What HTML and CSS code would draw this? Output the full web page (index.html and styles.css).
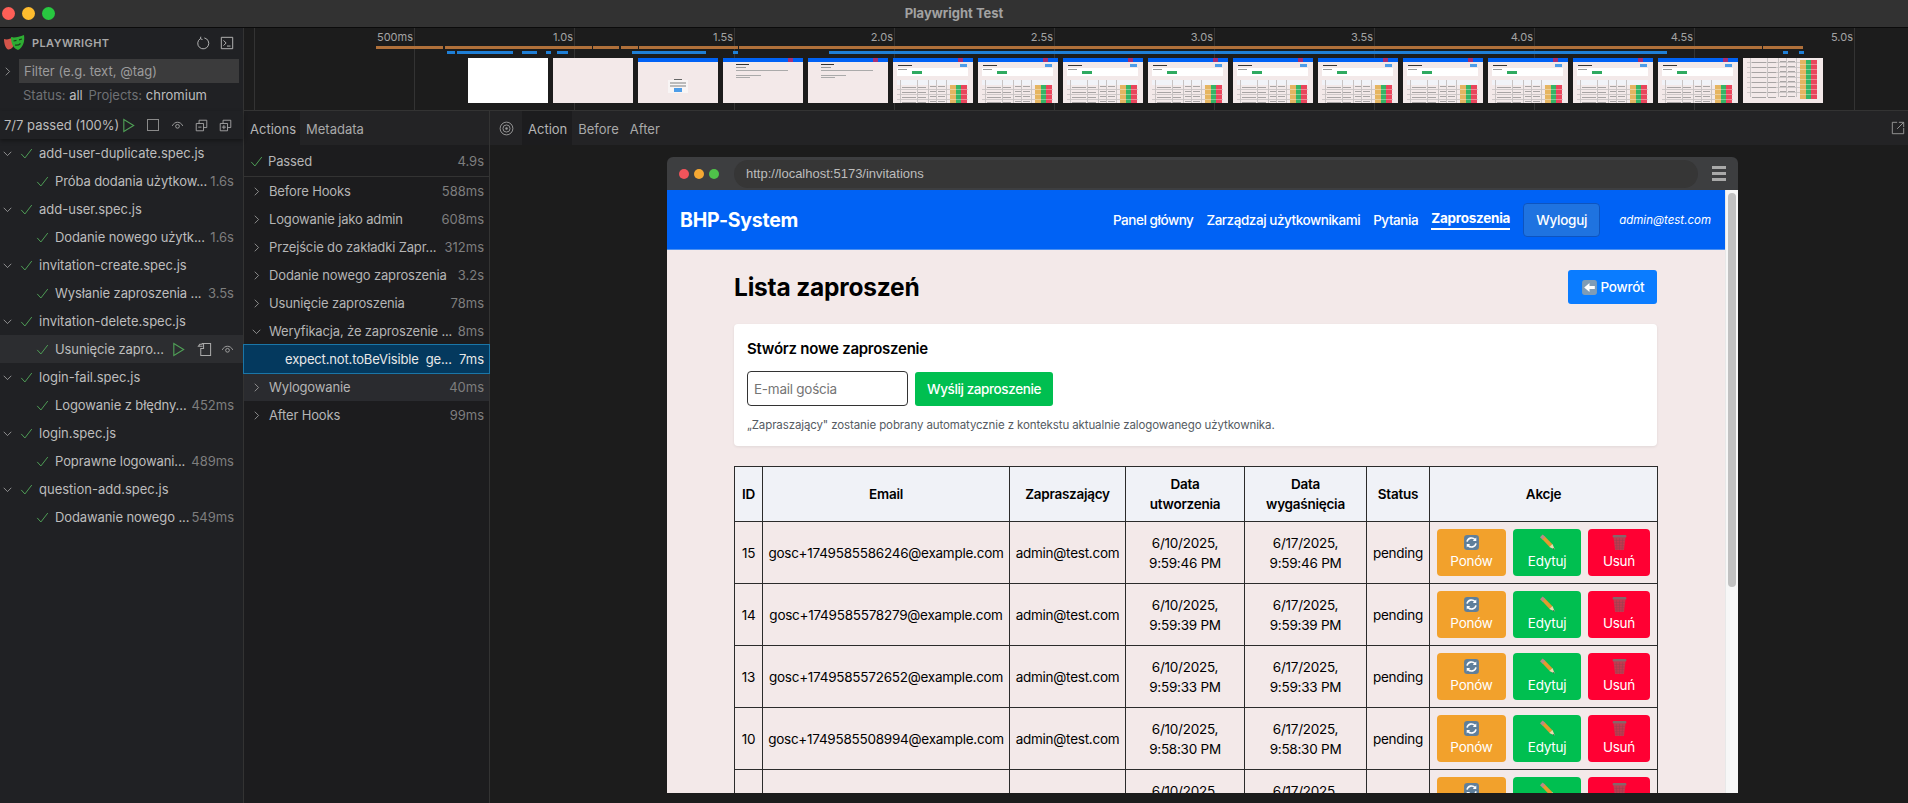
FILE: index.html
```html
<!DOCTYPE html>
<html lang="pl">
<head>
    <title>Playwright Test</title>
    <meta charset="UTF-8">
    <meta name="viewport" content="width=device-width, initial-scale=1.0">
    <link rel="stylesheet" href="styles.css">
</head>
<body>
    <svg class="defs" xmlns="http://www.w3.org/2000/svg">
        <symbol id="i-right" viewBox="0 0 16 16"><path d="M5.5 2.5 11 8l-5.5 5.5" fill="none" stroke="currentColor" stroke-width="1.1"/></symbol>
        <symbol id="i-down" viewBox="0 0 16 16"><path d="M2.5 5.5 8 11l5.5-5.5" fill="none" stroke="currentColor" stroke-width="1.1"/></symbol>
        <symbol id="i-check" viewBox="0 0 16 16"><path d="M1.5 8.5 6 13.5 14.5 2.5" fill="none" stroke="currentColor" stroke-width="1.2"/></symbol>
        <symbol id="i-play" viewBox="0 0 16 16"><path d="M3 1.5v13L13.5 8z" fill="none" stroke="currentColor" stroke-width="1.2"/></symbol>
        <symbol id="i-eye" viewBox="0 0 16 16"><path d="M1.5 8.5C3 5.5 5.5 4 8 4s5 1.500 6.5 4.500" fill="none" stroke="currentColor" stroke-width="1.1"/><circle cx="8" cy="9" r="2.3" fill="none" stroke="currentColor" stroke-width="1.1"/></symbol>
        <symbol id="i-collapse" viewBox="0 0 16 16"><path d="M1.5 5.5h9v9h-9zM5 5.5V1.5h9.5v9h-4M4 10h4" fill="none" stroke="currentColor" stroke-width="1.1"/></symbol>
        <symbol id="i-expand" viewBox="0 0 16 16"><path d="M1.5 5.5h9v9h-9zM5 5.5V1.5h9.5v9h-4M3.500 10h5M6 7.500v5" fill="none" stroke="currentColor" stroke-width="1.1"/></symbol>
        <symbol id="i-watch" viewBox="0 0 16 16"><path d="M6 4.5H1.500L3 2.500h3M5 1.500h9.500v13H4V7h3V1.500" fill="none" stroke="currentColor" stroke-width="1.1"/></symbol>
        <symbol id="i-refresh" viewBox="0 0 16 16"><rect x="1" y="1" width="14" height="14" rx="3" fill="#5f7f9b"/><path d="M3.800 7.200A4.300 4.300 0 0 1 11.300 5.300M12.200 8.800A4.300 4.300 0 0 1 4.700 10.700" fill="none" stroke="#fff" stroke-width="1.5"/><path d="M12.500 3.300v3.400H9.200zM3.500 12.700V9.300h3.300z" fill="#fff"/></symbol>
        <symbol id="i-pencil" viewBox="0 0 16 16"><path d="M4 3.300 11.300 11" stroke="#e49a2f" stroke-width="3.6"/><path d="M2.200 1.700 4.600 4" stroke="#b98a86" stroke-width="3.6"/><path d="M9.700 12.300 12.700 9.500 14.800 14.700z" fill="#ecd7ae"/><path d="M13.500 13.200 14.800 14.700 12.900 14z" fill="#444"/></symbol>
        <symbol id="i-trash" viewBox="0 0 16 16"><path d="M2.300 3 3.800 15h8.400l1.500-12z" fill="#c43a50"/><path d="M3 6h10M3.300 8.500h9.400M3.600 11h8.800M3.800 13.300h8.400M5 4l.6 11M8 4v11M11 4l-.6 11" stroke="#98404f" stroke-width=".5"/><rect x="1.500" y="1" width="13" height="2.4" rx="1" fill="#86666a"/></symbol>
        <symbol id="i-back" viewBox="0 0 16 16"><rect x="1" y="1" width="14" height="14" rx="2.5" fill="#7f9cb6"/><path d="M3 8 8 3.800v2.700h5v3H8v2.700z" fill="#fff"/></symbol>
    </svg>

    <header class="titlebar">
        <span class="light light-red"></span>
        <span class="light light-yellow"></span>
        <span class="light light-green"></span>
        <div class="titlebar-text">Playwright Test</div>
    </header>

    <div class="main">
        <aside class="sidebar">
            <div class="brand">
                <svg class="brand-logo" viewBox="0 0 22 16">
                    <path d="M1 4.500C4 5.500 7 4.500 10 3l1 7c-1 4-4 5-6 5-2-1-4-5-4-10.500z" fill="#d4544a"/>
                    <path d="M8 2.500C11 3.500 16 2.500 21 .5c1 6.500-1 12.500-6 15-4-1.500-7-5.500-7-13z" fill="#2ead33"/>
                    <path d="M10.500 6.500l3-.7M16 5.300l3-.8M12 10.500c2 .5 4 0 5.500-1.500" stroke="#1b3f1d" stroke-width="1.2" fill="none"/>
                </svg>
                <span class="brand-name">PLAYWRIGHT</span>
                <svg class="brand-btn" viewBox="0 0 16 16"><path d="M5 3A6.300 6.300 0 1 0 9.500 2.200M5.500 .8 5 3.200l2.400.8" fill="none" stroke="currentColor" stroke-width="1.1"/></svg>
                <svg class="brand-btn" viewBox="0 0 16 16"><path d="M1.500 1.500h13v13h-13zM4 5l3 3-3 3M8 11.500h4" fill="none" stroke="currentColor" stroke-width="1.1"/></svg>
            </div>
            <div class="filter-row">
                <svg class="chev"><use href="#i-right"/></svg>
                <input class="filter-input" type="text" placeholder="Filter (e.g. text, @tag)">
            </div>
            <div class="status-row">
                <span class="dim">Status:</span> <span class="lit">all</span>
                <span class="dim status-gap">Projects:</span> <span class="lit">chromium</span>
            </div>
            <div class="toolbar">
                <span class="toolbar-count">7/7 passed (100%)</span>
                <svg class="tool tool-play"><use href="#i-play"/></svg>
                <span class="tool-stop"></span>
                <svg class="tool"><use href="#i-eye"/></svg>
                <svg class="tool"><use href="#i-collapse"/></svg>
                <svg class="tool"><use href="#i-expand"/></svg>
            </div>
            <div class="tree">
                <div class="tree-row"><svg class="chev"><use href="#i-down"/></svg><svg class="check"><use href="#i-check"/></svg><span class="tree-name">add-user-duplicate.spec.js</span></div>
                <div class="tree-row tree-child"><svg class="check"><use href="#i-check"/></svg><span class="tree-name">Próba dodania użytkow...</span><span class="time">1.6s</span></div>
                <div class="tree-row"><svg class="chev"><use href="#i-down"/></svg><svg class="check"><use href="#i-check"/></svg><span class="tree-name">add-user.spec.js</span></div>
                <div class="tree-row tree-child"><svg class="check"><use href="#i-check"/></svg><span class="tree-name">Dodanie nowego użytk...</span><span class="time">1.6s</span></div>
                <div class="tree-row"><svg class="chev"><use href="#i-down"/></svg><svg class="check"><use href="#i-check"/></svg><span class="tree-name">invitation-create.spec.js</span></div>
                <div class="tree-row tree-child"><svg class="check"><use href="#i-check"/></svg><span class="tree-name">Wysłanie zaproszenia ...</span><span class="time">3.5s</span></div>
                <div class="tree-row"><svg class="chev"><use href="#i-down"/></svg><svg class="check"><use href="#i-check"/></svg><span class="tree-name">invitation-delete.spec.js</span></div>
                <div class="tree-row tree-child tree-active">
                    <svg class="check"><use href="#i-check"/></svg><span class="tree-name">Usunięcie zapro...</span>
                    <span class="tree-tools">
                        <svg class="tool tool-play"><use href="#i-play"/></svg>
                        <svg class="tool tool-watch"><use href="#i-watch"/></svg>
                        <svg class="tool tool-eye"><use href="#i-eye"/></svg>
                    </span>
                </div>
                <div class="tree-row"><svg class="chev"><use href="#i-down"/></svg><svg class="check"><use href="#i-check"/></svg><span class="tree-name">login-fail.spec.js</span></div>
                <div class="tree-row tree-child"><svg class="check"><use href="#i-check"/></svg><span class="tree-name">Logowanie z błędny...</span><span class="time">452ms</span></div>
                <div class="tree-row"><svg class="chev"><use href="#i-down"/></svg><svg class="check"><use href="#i-check"/></svg><span class="tree-name">login.spec.js</span></div>
                <div class="tree-row tree-child"><svg class="check"><use href="#i-check"/></svg><span class="tree-name">Poprawne logowani...</span><span class="time">489ms</span></div>
                <div class="tree-row"><svg class="chev"><use href="#i-down"/></svg><svg class="check"><use href="#i-check"/></svg><span class="tree-name">question-add.spec.js</span></div>
                <div class="tree-row tree-child"><svg class="check"><use href="#i-check"/></svg><span class="tree-name">Dodawanie nowego ...</span><span class="time">549ms</span></div>
            </div>
        </aside>

        <div class="workspace">
            <section class="timeline">
                <div class="tick" style="left: 10px"></div>
                <div class="tick" style="left: 170px"><span>500ms</span></div>
                <div class="tick" style="left: 330px"><span>1.0s</span></div>
                <div class="tick" style="left: 490px"><span>1.5s</span></div>
                <div class="tick" style="left: 650px"><span>2.0s</span></div>
                <div class="tick" style="left: 810px"><span>2.5s</span></div>
                <div class="tick" style="left: 970px"><span>3.0s</span></div>
                <div class="tick" style="left: 1130px"><span>3.5s</span></div>
                <div class="tick" style="left: 1290px"><span>4.0s</span></div>
                <div class="tick" style="left: 1450px"><span>4.5s</span></div>
                <div class="tick" style="left: 1610px"><span>5.0s</span></div>

                <div class="bar bar-orange" style="left: 132px; width: 67px"></div>
                <div class="bar bar-orange" style="left: 201px; width: 147px"></div>
                <div class="bar bar-orange" style="left: 349px; width: 26px"></div>
                <div class="bar bar-orange" style="left: 377px; width: 17px"></div>
                <div class="bar bar-orange" style="left: 395px; width: 99px"></div>
                <div class="bar bar-orange" style="left: 495px; width: 1023px"></div>
                <div class="bar bar-orange" style="left: 1519px; width: 40px"></div>

                <div class="bar bar-blue" style="left: 203px; width: 8px"></div>
                <div class="bar bar-blue" style="left: 213px; width: 56px"></div>
                <div class="bar bar-blue" style="left: 278px; width: 15px"></div>
                <div class="bar bar-blue" style="left: 302px; width: 5px"></div>
                <div class="bar bar-blue" style="left: 313px; width: 11px"></div>
                <div class="bar bar-blue" style="left: 388px; width: 74px"></div>
                <div class="bar bar-blue" style="left: 489px; width: 5px"></div>
                <div class="bar bar-blue" style="left: 585px; width: 838px"></div>
                <div class="bar bar-blue" style="left: 1539px; width: 5px"></div>
                <div class="bar bar-blue" style="left: 1555px; width: 5px"></div>

                <div class="filmstrip">
                    <div class="thumb thumb-blank"></div>
                    <div class="thumb thumb-pink"></div>
                    <div class="thumb thumb-login"></div>
                    <div class="thumb thumb-panel"></div>
                    <div class="thumb thumb-panel"></div>
                    <div class="thumb thumb-list"></div>
                    <div class="thumb thumb-list"></div>
                    <div class="thumb thumb-list"></div>
                    <div class="thumb thumb-list"></div>
                    <div class="thumb thumb-list"></div>
                    <div class="thumb thumb-list"></div>
                    <div class="thumb thumb-list"></div>
                    <div class="thumb thumb-list"></div>
                    <div class="thumb thumb-list"></div>
                    <div class="thumb thumb-list"></div>
                    <div class="thumb thumb-scrolled"></div>
                </div>
            </section>

            <div class="details">
                <section class="actions">
                    <div class="tabs">
                        <span class="tab tab-active">Actions</span>
                        <span class="tab">Metadata</span>
                    </div>
                    <div class="passed-row">
                        <svg class="check"><use href="#i-check"/></svg>
                        <span class="action-name">Passed</span>
                        <span class="time">4.9s</span>
                    </div>
                    <div class="action-row"><svg class="chev"><use href="#i-right"/></svg><span class="action-name">Before Hooks</span><span class="time">588ms</span></div>
                    <div class="action-row"><svg class="chev"><use href="#i-right"/></svg><span class="action-name">Logowanie jako admin</span><span class="time">608ms</span></div>
                    <div class="action-row"><svg class="chev"><use href="#i-right"/></svg><span class="action-name">Przejście do zakładki Zapr...</span><span class="time">312ms</span></div>
                    <div class="action-row"><svg class="chev"><use href="#i-right"/></svg><span class="action-name">Dodanie nowego zaproszenia</span><span class="time">3.2s</span></div>
                    <div class="action-row"><svg class="chev"><use href="#i-right"/></svg><span class="action-name">Usunięcie zaproszenia</span><span class="time">78ms</span></div>
                    <div class="action-row"><svg class="chev"><use href="#i-down"/></svg><span class="action-name">Weryfikacja, że zaproszenie ...</span><span class="time">8ms</span></div>
                    <div class="action-row action-selected"><span class="action-name">expect.not.toBeVisible&nbsp; ge...</span><span class="time">7ms</span></div>
                    <div class="action-row action-hover"><svg class="chev"><use href="#i-right"/></svg><span class="action-name">Wylogowanie</span><span class="time">40ms</span></div>
                    <div class="action-row"><svg class="chev"><use href="#i-right"/></svg><span class="action-name">After Hooks</span><span class="time">99ms</span></div>
                </section>

                <section class="snapshot">
                    <div class="tabs snapshot-tabs">
                        <svg class="target" viewBox="0 0 16 16"><circle cx="8" cy="8" r="6.8" fill="none" stroke="currentColor"/><circle cx="8" cy="8" r="3.8" fill="none" stroke="currentColor"/><circle cx="8" cy="8" r="1.3" fill="currentColor"/></svg>
                        <span class="tab tab-active">Action</span>
                        <span class="tab">Before</span>
                        <span class="tab">After</span>
                        <svg class="popout" viewBox="0 0 16 16"><path d="M7 1.500H1.500v13h13V8M9 1.500h5.500V7M14.500 1.500 7 9" fill="none" stroke="currentColor"/></svg>
                    </div>

                    <div class="browser">
                        <div class="browser-bar">
                            <span class="dot dot-red"></span>
                            <span class="dot dot-yellow"></span>
                            <span class="dot dot-green"></span>
                            <div class="url">http://localhost:5173/invitations</div>
                            <div class="burger"><span></span><span></span><span></span></div>
                        </div>
                        <div class="viewport">
                            <div class="app">
                                <nav class="navbar">
                                    <div class="nav-logo">BHP-System</div>
                                    <div class="nav-links">
                                        <a href="#" class="nav-link">Panel główny</a>
                                        <a href="#" class="nav-link">Zarządzaj użytkownikami</a>
                                        <a href="#" class="nav-link">Pytania</a>
                                        <a href="#" class="nav-link nav-current">Zaproszenia</a>
                                        <button type="button" class="logout">Wyloguj</button>
                                        <span class="nav-user">admin@test.com</span>
                                    </div>
                                </nav>
                                <div class="content">
                                    <div class="page-head">
                                        <h1>Lista zaproszeń</h1>
                                        <button type="button" class="back"><svg class="emoji"><use href="#i-back"/></svg>Powrót</button>
                                    </div>
                                    <div class="card">
                                        <h2>Stwórz nowe zaproszenie</h2>
                                        <div class="invite-form">
                                            <input class="invite-input" type="text" placeholder="E-mail gościa">
                                            <button type="button" class="invite-send">Wyślij zaproszenie</button>
                                        </div>
                                        <p class="invite-note">„Zapraszający" zostanie pobrany automatycznie z kontekstu aktualnie zalogowanego użytkownika.</p>
                                    </div>
                                    <table class="invites">
                                        <thead>
                                            <tr>
                                                <th class="col-id">ID</th>
                                                <th class="col-email">Email</th>
                                                <th class="col-by">Zapraszający</th>
                                                <th class="col-created">Data utworzenia</th>
                                                <th class="col-expires">Data wygaśnięcia</th>
                                                <th class="col-status">Status</th>
                                                <th class="col-actions">Akcje</th>
                                            </tr>
                                        </thead>
                                        <tbody>
                                            <tr>
                                                <td>15</td>
                                                <td>gosc+1749585586246@example.com</td>
                                                <td>admin@test.com</td>
                                                <td>6/10/2025,<br>9:59:46 PM</td>
                                                <td>6/17/2025,<br>9:59:46 PM</td>
                                                <td>pending</td>
                                                <td class="cell-actions"><div class="row-actions">
                                                    <button type="button" class="act act-resend"><svg class="emoji"><use href="#i-refresh"/></svg>Ponów</button>
                                                    <button type="button" class="act act-edit"><svg class="emoji"><use href="#i-pencil"/></svg>Edytuj</button>
                                                    <button type="button" class="act act-delete"><svg class="emoji"><use href="#i-trash"/></svg>Usuń</button>
                                                </div></td>
                                            </tr>
                                            <tr>
                                                <td>14</td>
                                                <td>gosc+1749585578279@example.com</td>
                                                <td>admin@test.com</td>
                                                <td>6/10/2025,<br>9:59:39 PM</td>
                                                <td>6/17/2025,<br>9:59:39 PM</td>
                                                <td>pending</td>
                                                <td class="cell-actions"><div class="row-actions">
                                                    <button type="button" class="act act-resend"><svg class="emoji"><use href="#i-refresh"/></svg>Ponów</button>
                                                    <button type="button" class="act act-edit"><svg class="emoji"><use href="#i-pencil"/></svg>Edytuj</button>
                                                    <button type="button" class="act act-delete"><svg class="emoji"><use href="#i-trash"/></svg>Usuń</button>
                                                </div></td>
                                            </tr>
                                            <tr>
                                                <td>13</td>
                                                <td>gosc+1749585572652@example.com</td>
                                                <td>admin@test.com</td>
                                                <td>6/10/2025,<br>9:59:33 PM</td>
                                                <td>6/17/2025,<br>9:59:33 PM</td>
                                                <td>pending</td>
                                                <td class="cell-actions"><div class="row-actions">
                                                    <button type="button" class="act act-resend"><svg class="emoji"><use href="#i-refresh"/></svg>Ponów</button>
                                                    <button type="button" class="act act-edit"><svg class="emoji"><use href="#i-pencil"/></svg>Edytuj</button>
                                                    <button type="button" class="act act-delete"><svg class="emoji"><use href="#i-trash"/></svg>Usuń</button>
                                                </div></td>
                                            </tr>
                                            <tr>
                                                <td>10</td>
                                                <td>gosc+1749585508994@example.com</td>
                                                <td>admin@test.com</td>
                                                <td>6/10/2025,<br>9:58:30 PM</td>
                                                <td>6/17/2025,<br>9:58:30 PM</td>
                                                <td>pending</td>
                                                <td class="cell-actions"><div class="row-actions">
                                                    <button type="button" class="act act-resend"><svg class="emoji"><use href="#i-refresh"/></svg>Ponów</button>
                                                    <button type="button" class="act act-edit"><svg class="emoji"><use href="#i-pencil"/></svg>Edytuj</button>
                                                    <button type="button" class="act act-delete"><svg class="emoji"><use href="#i-trash"/></svg>Usuń</button>
                                                </div></td>
                                            </tr>
                                            <tr>
                                                <td></td>
                                                <td></td>
                                                <td></td>
                                                <td>6/10/2025,<br>&nbsp;</td>
                                                <td>6/17/2025,<br>&nbsp;</td>
                                                <td></td>
                                                <td class="cell-actions"><div class="row-actions">
                                                    <button type="button" class="act act-resend"><svg class="emoji"><use href="#i-refresh"/></svg>Ponów</button>
                                                    <button type="button" class="act act-edit"><svg class="emoji"><use href="#i-pencil"/></svg>Edytuj</button>
                                                    <button type="button" class="act act-delete"><svg class="emoji"><use href="#i-trash"/></svg>Usuń</button>
                                                </div></td>
                                            </tr>
                                        </tbody>
                                    </table>
                                </div>
                            </div>
                            <div class="scrollbar"><div class="scrollbar-thumb"></div></div>
                        </div>
                    </div>
                </section>
            </div>
        </div>
    </div>
</body>
</html>
```

FILE: styles.css
```css
* {
    box-sizing: border-box;
}
html, body {
    height: 100%;
}
body {
    margin: 0;
    display: flex;
    flex-direction: column;
    overflow: hidden;
    background-color: #1c1c1c;
    color: #cccccc;
    font-family: Inter, "Noto Sans", sans-serif;
    font-size: 13px;
}
.defs {
    display: none;
}

/* window title */
.titlebar {
    position: relative;
    flex: none;
    height: 28px;
    display: flex;
    align-items: center;
    gap: 7px;
    padding-left: 2px;
    background-color: #323232;
    border-bottom: 1px solid #0b0b0b;
}
.light {
    width: 13px;
    height: 13px;
    border-radius: 50%;
}
.light-red { background-color: #ff5f57; }
.light-yellow { background-color: #febc2e; }
.light-green { background-color: #28c840; }
.titlebar-text {
    position: absolute;
    left: 0;
    right: 0;
    top: 5px;
    text-align: center;
    font-size: 13px;
    font-weight: 700;
    color: #a2a2a2;
}

.main {
    flex: 1;
    display: flex;
    min-height: 0;
}

/* left sidebar */
.sidebar {
    flex: none;
    width: 244px;
    background-color: #202124;
    border-right: 1px solid #333333;
}
.brand {
    height: 31px;
    display: flex;
    align-items: center;
    padding: 0 9px 2px 3px;
}
.brand-logo {
    width: 22px;
    height: 17px;
}
.brand-name {
    flex: 1;
    margin-left: 7px;
    font-size: 11px;
    font-weight: 600;
    letter-spacing: 0.4px;
    color: #a8a8a8;
}
.brand-btn {
    width: 14px;
    height: 14px;
    margin-left: 10px;
    color: #b5b5b5;
}
.filter-row {
    height: 24px;
    display: flex;
    align-items: center;
    padding-left: 2px;
}
.chev {
    flex: none;
    width: 11px;
    height: 11px;
    color: #b0b0b0;
}
.filter-input {
    width: 220px;
    height: 24px;
    margin-left: 6px;
    padding: 0 5px;
    border: none;
    outline: none;
    background-color: #3b3b3c;
    color: #ccc;
    font: inherit;
}
.filter-input::placeholder {
    color: #9c9c9c;
}
.status-row {
    height: 24px;
    margin-bottom: 4px;
    padding-left: 23px;
    line-height: 24px;
}
.dim { color: #6f7175; }
.lit { color: #bdbdbd; }
.status-gap { margin-left: 2px; }
.toolbar {
    position: relative;
    height: 28px;
    display: flex;
    align-items: center;
    padding-left: 4px;
    box-shadow: 0 2px 4px rgba(0, 0, 0, 0.35);
}
.toolbar-count {
    width: 126px;
    color: #bcbcbc;
}
.tool {
    flex: none;
    width: 13px;
    height: 13px;
    margin-right: 11px;
    color: #a9a9a9;
}
.tool-play {
    color: #4f9f56;
}
.toolbar .tool-play {
    width: 15px;
    height: 15px;
    margin-right: 11px;
}
.tool-stop {
    flex: none;
    width: 12px;
    height: 12px;
    margin-right: 12px;
    border: 1px solid #8a8a8a;
}
.tree-row {
    height: 28px;
    display: flex;
    align-items: center;
    padding-left: 2px;
    padding-right: 9px;
}
.check {
    flex: none;
    width: 13px;
    height: 13px;
    margin-left: 7px;
    color: #4f9f56;
}
.tree-name {
    margin-left: 6px;
    color: #bdbdbd;
    white-space: nowrap;
}
.tree-child {
    padding-left: 29px;
}
.tree-child .tree-name {
    letter-spacing: -0.1px;
}
.tree-active {
    background-color: #2c2d30;
    padding-right: 0;
}
.tree-tools {
    margin-left: auto;
    display: flex;
    align-items: center;
}
.tree-tools .tool-play {
    width: 15px;
    height: 15px;
    margin-right: 11px;
}
.tree-tools .tool-watch {
    width: 15px;
    height: 15px;
    margin-right: 9px;
}
.tree-tools .tool-eye {
    margin-right: 9px;
}
.time {
    flex: none;
    margin-left: auto;
    color: #7e7e7e;
    white-space: nowrap;
}

/* timeline strip */
.workspace {
    flex: 1;
    display: flex;
    flex-direction: column;
    min-width: 0;
}
.timeline {
    position: relative;
    flex: none;
    height: 83px;
    background-color: #1c1c1c;
    border-bottom: 1px solid #333333;
    overflow: hidden;
}
.tick {
    position: absolute;
    top: 0;
    bottom: 0;
    border-left: 1px solid #333333;
}
.tick span {
    position: absolute;
    top: 2px;
    right: 100%;
    padding-right: 2px;
    font-size: 11px;
    line-height: 14px;
    color: #a4a4a4;
}
.bar {
    position: absolute;
}
.bar-orange {
    top: 18px;
    height: 3px;
    background-color: #b0703a;
}
.bar-blue {
    top: 23px;
    height: 3px;
    background-color: #1f7fd6;
}
.filmstrip {
    position: absolute;
    left: 224px;
    top: 30px;
    display: flex;
    gap: 5px;
}
.thumb {
    width: 80px;
    height: 45px;
    background-repeat: no-repeat;
}
.thumb-blank {
    background-color: #fff;
}
.thumb-pink {
    background-color: #f3e9e9;
}
.thumb-login {
    background-color: #f3e9e9;
    background-image:
        linear-gradient(#0062f5, #0062f5),
        linear-gradient(#4d9de8, #4d9de8),
        linear-gradient(#bbb, #bbb),
        linear-gradient(#bbb, #bbb),
        linear-gradient(#666, #666),
        linear-gradient(#f8f5f5, #f8f5f5);
    background-size: 100% 4px, 8px 4px, 16px 2px, 16px 2px, 8px 1px, 20px 13px;
    background-position: 0 0, 36px 30px, 32px 24px, 32px 27px, 36px 21px, 30px 22px;
}
.thumb-panel {
    background-color: #f3e9e9;
    background-image:
        linear-gradient(#a52f7a, #a52f7a),
        linear-gradient(#0062f5, #0062f5),
        linear-gradient(#333, #333),
        linear-gradient(#999, #999),
        linear-gradient(#aaa, #aaa),
        linear-gradient(#aaa, #aaa),
        linear-gradient(#aaa, #aaa);
    background-size: 5px 4px, 100% 4px, 13px 1px, 10px 1px, 52px 1px, 25px 1px, 14px 1px;
    background-position: 65px 0, 0 0, 13px 6px, 13px 9px, 13px 12px, 13px 17px, 13px 19px;
}
.thumb-list {
    background-color: #f3e9e9;
    background-image:
        linear-gradient(#a52f7a, #a52f7a),
        linear-gradient(#0062f5, #0062f5),
        linear-gradient(#4d9de8, #4d9de8),
        linear-gradient(#333, #333),
        linear-gradient(#999, #999),
        linear-gradient(#2faa60, #2faa60),
        linear-gradient(#fff, #fff),
        repeating-linear-gradient(transparent 0 4px, rgba(255, 255, 255, 0.35) 4px 5px),
        linear-gradient(#e5b562, #e5b562),
        linear-gradient(#35b566, #35b566),
        linear-gradient(#e9455c, #e9455c),
        repeating-linear-gradient(transparent 0 2px, #a8a4a4 2px 3px, transparent 3px 5px),
        repeating-linear-gradient(transparent 0 2px, #a8a4a4 2px 3px, transparent 3px 5px),
        repeating-linear-gradient(transparent 0 1px, #a8a4a4 1px 2px, transparent 2px 5px),
        repeating-linear-gradient(transparent 0 1px, #a8a4a4 1px 2px, transparent 2px 5px),
        linear-gradient(90deg, transparent 0 3px, #c9c4c4 3px 4px, transparent 4px 20px, #c9c4c4 20px 21px, transparent 21px 31px, #c9c4c4 31px 32px, transparent 32px 39px, #c9c4c4 39px 40px, transparent 40px 49px, #c9c4c4 49px 50px, transparent 50px),
        linear-gradient(#f1f3f8, #f1f3f8),
        repeating-linear-gradient(#f3e9e9 0 4px, #cfc9c9 4px 5px);
    background-size: 5px 4px, 100% 4px, 7px 3px, 14px 1px, 9px 1px, 10px 3px, 71px 8px, 17px 18px, 6px 18px, 5px 18px, 6px 18px, 14px 18px, 8px 18px, 6px 18px, 7px 18px, 71px 23px, 71px 5px, 71px 23px;
    background-position: 65px 0, 0 0, 67px 6px, 5px 7px, 5px 11px, 19px 13px, 4px 10px, 57px 27px, 57px 27px, 63px 27px, 68px 27px, 9px 27px, 25px 27px, 37px 27px, 45px 27px, 4px 22px, 4px 22px, 4px 22px;
}
.thumb-scrolled {
    background-color: #f3e9e9;
    background-image:
        repeating-linear-gradient(transparent 0 4px, rgba(255, 255, 255, 0.35) 4px 5px),
        linear-gradient(#e5b562, #e5b562),
        linear-gradient(#35b566, #35b566),
        linear-gradient(#e9455c, #e9455c),
        repeating-linear-gradient(transparent 0 2px, #a8a4a4 2px 3px, transparent 3px 5px),
        repeating-linear-gradient(transparent 0 2px, #a8a4a4 2px 3px, transparent 3px 5px),
        repeating-linear-gradient(transparent 0 1px, #a8a4a4 1px 2px, transparent 2px 5px),
        repeating-linear-gradient(transparent 0 1px, #a8a4a4 1px 2px, transparent 2px 5px),
        linear-gradient(90deg, transparent 0 3px, #c9c4c4 3px 4px, transparent 4px 20px, #c9c4c4 20px 21px, transparent 21px 31px, #c9c4c4 31px 32px, transparent 32px 39px, #c9c4c4 39px 40px, transparent 40px 49px, #c9c4c4 49px 50px, transparent 50px),
        repeating-linear-gradient(#f3e9e9 0 4px, #cfc9c9 4px 5px);
    background-size: 17px 39px, 6px 39px, 5px 39px, 6px 39px, 14px 39px, 8px 39px, 6px 39px, 7px 39px, 71px 39px, 70px 39px;
    background-position: 57px 2px, 57px 2px, 63px 2px, 68px 2px, 9px 2px, 25px 2px, 37px 2px, 45px 2px, 4px 0, 4px 0;
}

/* actions list */
.details {
    flex: 1;
    display: flex;
    min-height: 0;
}
.actions {
    flex: none;
    width: 246px;
    background-color: #1c1c1e;
    border-right: 1px solid #333333;
}
.tabs {
    height: 34px;
    display: flex;
    background-color: #232325;
}
.tab {
    padding: 0 6px;
    line-height: 36px;
    color: #a9a9a9;
}
.tab-active {
    background-color: #1c1c1e;
    color: #b5b5b5;
}
.actions .tab {
    padding: 0 7px 0 6px;
}
.actions .tab-active {
    width: 56px;
}
.passed-row {
    height: 31px;
    margin-top: 1px;
    display: flex;
    align-items: center;
    padding-right: 5px;
    border-bottom: 1px solid #333333;
}
.passed-row .check {
    margin-left: 6px;
}
.passed-row .action-name {
    margin-left: 5px;
}
.action-row {
    height: 28px;
    display: flex;
    align-items: center;
    padding: 0 5px 0 7px;
}
.action-name {
    margin-left: 7px;
    color: #b5b5b5;
    letter-spacing: -0.15px;
    white-space: nowrap;
}
.action-selected {
    position: relative;
    z-index: 1;
    padding-left: 41px;
    background-color: #04395e;
    box-shadow: 0 0 0 1px #1a76a8;
}
.action-selected .action-name {
    margin-left: 0;
    color: #e8e8e8;
}
.action-selected .time {
    color: #e8e8e8;
}
.action-hover {
    background-color: #2a2b2f;
}

/* snapshot pane */
.snapshot {
    flex: 1;
    min-width: 0;
    background-color: #1c1c1c;
}
.snapshot-tabs {
    align-items: stretch;
}
.target {
    flex: none;
    width: 15px;
    height: 15px;
    align-self: center;
    margin: 0 8px 0 9px;
    color: #9a9a9a;
}
.snapshot-tabs .tab {
    padding: 0 5px 0 6px;
}
.popout {
    width: 14px;
    height: 14px;
    align-self: center;
    margin-left: auto;
    margin-right: 3px;
    color: #a0a0a0;
}

/* browser frame */
.browser {
    width: 1071px;
    height: 636px;
    margin: 12px 0 0 177px;
    display: flex;
    flex-direction: column;
    border-radius: 6px 6px 0 0;
    overflow: hidden;
}
.browser-bar {
    flex: none;
    height: 33px;
    display: flex;
    align-items: center;
    background-color: #3d3e40;
    padding-left: 12px;
}
.dot {
    width: 10px;
    height: 10px;
    margin-right: 5px;
    border-radius: 50%;
}
.dot-red { background-color: #f2545b; }
.dot-yellow { background-color: #f5a833; }
.dot-green { background-color: #4fc24a; }
.url {
    width: 964px;
    height: 28px;
    margin-left: 10px;
    padding-left: 12px;
    border-radius: 14px;
    background-color: #363636;
    line-height: 28px;
    font-family: "Liberation Sans", Arial, sans-serif;
    font-size: 13px;
    color: #bdbdbd;
}
.burger {
    margin-left: 14px;
    display: flex;
    flex-direction: column;
    gap: 3px;
    width: 14px;
}
.burger span {
    height: 3px;
    background-color: #a9a9a9;
}
.viewport {
    flex: 1;
    display: flex;
    min-height: 0;
}
.app {
    flex: 1;
    min-width: 0;
    background-color: #f3e9e9;
    color: #000;
    font-family: Inter, "Noto Sans", sans-serif;
    font-size: 13.5px;
    letter-spacing: -0.25px;
}
.scrollbar {
    position: relative;
    flex: none;
    width: 13px;
    background-color: #f7f7f7;
    border-left: 1px solid #e8e8e8;
}
.scrollbar-thumb {
    position: absolute;
    top: 3px;
    left: 2px;
    width: 8px;
    height: 394px;
    border-radius: 4px;
    background-color: #c1c1c1;
}

/* page inside the frame */
.navbar {
    height: 60px;
    display: flex;
    align-items: center;
    justify-content: space-between;
    padding: 0 14px 0 13px;
    background-color: #0062f5;
    border-bottom: 1px solid #4d90ef;
    color: #fff;
}
.nav-logo {
    font-size: 19.5px;
    font-weight: 700;
}
.nav-links {
    display: flex;
    align-items: center;
    gap: 13px;
}
.nav-link {
    color: #fff;
    text-decoration: none;
    font-weight: 500;
    letter-spacing: -0.45px;
}
.nav-current {
    font-weight: 700;
    letter-spacing: -0.25px;
    padding-bottom: 2px;
    border-bottom: 2px solid #fff;
}
.logout {
    width: 77px;
    height: 34px;
    border: 1px solid #0d54c0;
    border-radius: 4px;
    background-color: #1f73e0;
    color: #fff;
    font: inherit;
    font-weight: 500;
    letter-spacing: inherit;
}
.nav-user {
    margin-left: 6px;
    font-size: 11.5px;
    font-style: italic;
    letter-spacing: 0;
}
.content {
    padding: 20px 68px 0 67px;
}
.page-head {
    display: flex;
    align-items: center;
    justify-content: space-between;
    height: 34px;
}
h1 {
    margin: 0;
    font-size: 24.5px;
    font-weight: 700;
    letter-spacing: -0.2px;
}
.back {
    width: 89px;
    height: 34px;
    display: flex;
    align-items: center;
    justify-content: center;
    gap: 3px;
    border: none;
    border-radius: 3px;
    background-color: #0a7cff;
    color: #fff;
    font: inherit;
    font-weight: 500;
    letter-spacing: inherit;
}
.card {
    height: 122px;
    margin-top: 20px;
    padding: 15px 13px 0;
    background-color: #fff;
    border-radius: 4px;
    box-shadow: 0 1px 3px rgba(0, 0, 0, 0.08);
}
h2 {
    margin: 0;
    font-size: 15px;
    line-height: 20px;
    font-weight: 600;
    letter-spacing: -0.25px;
}
.invite-form {
    display: flex;
    align-items: flex-end;
    gap: 7px;
    margin-top: 12px;
}
.invite-input {
    width: 161px;
    height: 35px;
    padding: 0 6px;
    border: 1px solid #333;
    border-radius: 4px;
    outline: none;
    font: inherit;
    letter-spacing: inherit;
}
.invite-input::placeholder {
    color: #757575;
}
.invite-send {
    width: 138px;
    height: 34px;
    border: none;
    border-radius: 3px;
    background-color: #00bf50;
    color: #fff;
    font: inherit;
    font-weight: 500;
    letter-spacing: -0.4px;
}
.invite-note {
    margin: 11px 0 0;
    font-size: 11.5px;
    line-height: 16px;
    letter-spacing: -0.11px;
    color: #555b62;
}
.invites {
    width: 923px;
    margin-top: 20px;
    table-layout: fixed;
    border-collapse: collapse;
}
.invites th, .invites td {
    border: 1px solid #2b2b2b;
    padding: 0;
    text-align: center;
    line-height: 20px;
}
.invites th {
    height: 55px;
    padding: 0 8px;
    background-color: #f0f2f7;
    font-weight: 600;
}
.invites .col-id {
    padding: 0;
}
.invites td {
    height: 62px;
    white-space: nowrap;
}
.col-id { width: 28px; }
.col-email { width: 247px; }
.col-by { width: 116px; }
.col-created { width: 119px; }
.col-expires { width: 122px; }
.col-status { width: 63px; }
.col-actions { width: 228px; }
.row-actions {
    display: flex;
    justify-content: space-between;
    padding: 0 7px 0 7px;
}
.act {
    height: 47px;
    display: flex;
    flex-direction: column;
    align-items: center;
    justify-content: center;
    padding: 0;
    border: none;
    border-radius: 4px;
    color: #fff;
    font: inherit;
    line-height: 20px;
    letter-spacing: inherit;
}
.act-resend { width: 69px; background-color: #f2a12c; }
.act-edit { width: 68px; background-color: #00bf50; }
.act-delete { width: 62px; background-color: #ff0033; }
.emoji {
    flex: none;
    width: 17px;
    height: 17px;
}
```
